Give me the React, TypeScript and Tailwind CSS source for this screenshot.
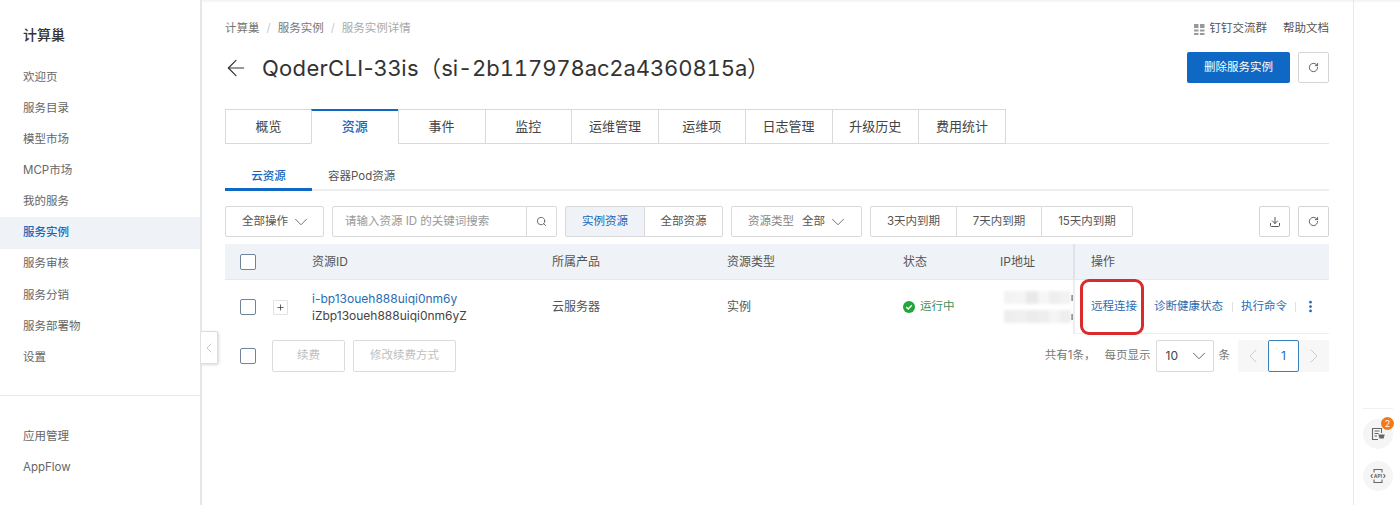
import { ArrowLeft, ChevronDown, ChevronLeft, ChevronRight, Download, EllipsisVertical, Plus, RotateCw, Search } from "lucide-react";
import React from "react";

const font = "font-['Inter','Noto_Sans_CJK_SC',sans-serif]";

const menuTop = ["欢迎页", "服务目录", "模型市场", "MCP市场", "我的服务", "服务实例", "服务审核", "服务分销", "服务部署物", "设置"];
const menuBottom = ["应用管理", "AppFlow"];
const tabs = ["概览", "资源", "事件", "监控", "运维管理", "运维项", "日志管理", "升级历史", "费用统计"];

function Sidebar() {
  return (
    <aside className="relative flex w-[202px] shrink-0 flex-col border-r-2 border-[#e4e6ea] bg-white">
      <h1 className="pl-[23px] pt-[26px] text-[14px] leading-[18px] font-medium text-[#333]">计算巢</h1>
      <nav className="mt-[18px] flex flex-col">
        {menuTop.map((item) => (
          <div
            key={item}
            className={`flex h-[31.1px] items-center pl-[23px] text-[11.5px] ${
              item === "服务实例" ? "bg-[#eff3f8] font-medium text-[#1a66b8]" : "text-[#666]"
            }`}
          >
            {item}
          </div>
        ))}
      </nav>
      <div className="mt-[22px] border-t border-[#e8e8e8] pt-[25px]">
        {menuBottom.map((item) => (
          <div key={item} className="flex h-[31px] items-center pl-[23px] text-[11.5px] text-[#666]">
            {item}
          </div>
        ))}
      </div>
      <div className="absolute left-[201px] top-[331px] z-10 flex h-[33px] w-[17px] items-center justify-center rounded-r-[2px] border border-l-0 border-[#ddd] bg-white shadow-[1px_1px_3px_rgba(0,0,0,0.15)]">
        <ChevronLeft size={20} strokeWidth={1} className="text-[#aaa]" />
      </div>
    </aside>
  );
}

function Header() {
  return (
    <>
      <div className="flex h-[18px] items-center justify-between text-[11.5px]">
        <div className="flex items-center text-[#777]">
          <span>计算巢</span>
          <span className="mx-[7px] text-[#ccc]">/</span>
          <span>服务实例</span>
          <span className="mx-[7px] text-[#ccc]">/</span>
          <span className="text-[#aaa]">服务实例详情</span>
        </div>
        <div className="flex items-center text-[#555]">
          <svg width="11" height="11" viewBox="0 0 11 11" className="mr-[5px] text-[#999]" fill="currentColor">
            <rect x="0" y="0" width="4.5" height="4" />
            <rect x="6" y="0" width="4.5" height="4" />
            <rect x="0" y="5.5" width="4.5" height="2" />
            <rect x="6" y="5.5" width="4.5" height="2" />
            <rect x="0" y="9" width="4.5" height="2" />
            <rect x="6" y="9" width="4.5" height="2" />
          </svg>
          <span>钉钉交流群</span>
          <span className="ml-[16px]">帮助文档</span>
        </div>
      </div>
      <div className="mt-[14px] flex h-[31px] items-center justify-between">
        <div className="flex items-center">
          <ArrowLeft size={26} strokeWidth={1.1} className="-ml-[2px] text-[#333]" />
          <span className="ml-[13px] text-[22px] leading-[30px] font-normal tracking-[0.3px] text-[#333]">
            QoderCLI-33is（<span className="tracking-[-0.1px] tabular-nums">si-2b117978ac2a4360815a</span>）
          </span>
        </div>
        <div className="flex items-center gap-[8px]">
          <button className="h-[31px] w-[103px] rounded-[2px] bg-[#0f68c4] text-[11.5px] text-white">删除服务实例</button>
          <IconButton>
            <RotateCw size={11} className="text-[#555]" />
          </IconButton>
        </div>
      </div>
    </>
  );
}

function IconButton({ children }: { children: React.ReactNode }) {
  return (
    <button className="flex h-[31px] w-[31px] items-center justify-center rounded-[2px] border border-[#d5d5d5] bg-white">
      {children}
    </button>
  );
}

function Tabs() {
  return (
    <div className="mt-[26px] flex h-[35px] border-b border-[#e4e4e4]">
      {tabs.map((tab) => (
        <div
          key={tab}
          className={`-ml-px flex h-[35px] w-[87.75px] items-center justify-center border border-[#d9d9d9] text-[13px] first:ml-0 first:w-[87px] ${
            tab === "资源"
              ? "border-t-[2px] border-t-[#0f68c4] border-b-white font-medium text-[#1a66b8]"
              : "bg-white text-[#444]"
          }`}
        >
          {tab}
        </div>
      ))}
    </div>
  );
}

function SubTabs() {
  return (
    <div className="mt-[16px] flex h-[31px] border-b-2 border-[#eceef0] text-[11.5px]">
      <div className="-mb-[2px] flex h-[31px] w-[87px] items-center justify-center border-b-[3px] border-[#0f68c4] pt-[5px] font-medium text-[#1a66b8]">云资源</div>
      <div className="flex items-center pl-[16px] pt-[4px] text-[#555]">容器Pod资源</div>
    </div>
  );
}

function Toolbar() {
  const box = "flex h-[31px] items-center border border-[#d9d9d9] text-[11.5px]";
  return (
    <div className="mt-[15px] flex h-[31px] items-center">
      <div className={`${box} w-[99px] justify-between rounded-[2px] bg-white pl-[16px] pr-[11px] text-[#555]`}>
        全部操作
        <ChevronDown size={22} strokeWidth={1} className="text-[#666]" />
      </div>
      <div className={`${box} ml-[8px] w-[225px] rounded-[2px] bg-white`}>
        <span className="flex-1 pl-[12px] text-[#999]">请输入资源 ID 的关键词搜索</span>
        <div className="flex h-full w-[30px] items-center justify-center border-l border-[#d9d9d9]">
          <Search size={11} className="text-[#666]" />
        </div>
      </div>
      <div className="ml-[8px] flex">
        <div className={`${box} w-[80px] justify-center rounded-l-[2px] bg-[#eff3f8] text-[#1a66b8]`}>实例资源</div>
        <div className={`${box} -ml-px w-[79px] justify-center rounded-r-[2px] bg-white text-[#555]`}>全部资源</div>
      </div>
      <div className={`${box} ml-[8px] w-[131px] rounded-[2px] bg-white pl-[16px] pr-[12px] text-[#555]`}>
        <span className="text-[#888]">资源类型</span>
        <span className="ml-[8px]">全部</span>
        <ChevronDown size={22} strokeWidth={1} className="ml-auto text-[#666]" />
      </div>
      <div className="ml-[8px] flex">
        <div className={`${box} w-[87px] justify-center rounded-l-[2px] bg-white text-[#555]`}>3天内到期</div>
        <div className={`${box} -ml-px w-[86px] justify-center bg-white text-[#555]`}>7天内到期</div>
        <div className={`${box} -ml-px w-[92px] justify-center rounded-r-[2px] bg-white text-[#555]`}>15天内到期</div>
      </div>
      <div className="ml-auto flex gap-[8px]">
        <IconButton>
          <Download size={12} className="text-[#555]" />
        </IconButton>
        <IconButton>
          <RotateCw size={11} className="text-[#555]" />
        </IconButton>
      </div>
    </div>
  );
}

function Checkbox() {
  return <div className="h-[16px] w-[16px] rounded-[2px] border border-[#6f8399] bg-white" />;
}

// masked IP addresses, drawn as a soft mosaic
const blurRows = [
  ["bg-[#f3f3f3]", "bg-[#f5f5f5]", "bg-[#e9e9e9]", "bg-[#f6f6f6]", "bg-[#eeeeee]", "bg-[#f2f2f2]"],
  ["bg-[#eeeeee]", "bg-[#f0f0f0]", "bg-[#ececec]", "bg-[#eeeeee]", "bg-[#f4f4f4]", "bg-[#eeeeee]"],
];

function Table() {
  return (
    <div className="mt-[7px] text-[12px] text-[#555]">
      <div className="grid h-[36px] grid-cols-[87px_240px_175px_176px_97px_73px_1fr] items-center border-b border-[#e4e7ec] bg-[#eff3f8]">
        <div className="pl-[15px]">
          <Checkbox />
        </div>
        <div>资源ID</div>
        <div>所属产品</div>
        <div>资源类型</div>
        <div>状态</div>
        <div>IP地址</div>
        <div className="flex h-full items-center border-l-2 border-[#dfe3e9] pl-[16px]">操作</div>
      </div>
      <div className="grid h-[54px] grid-cols-[87px_240px_175px_176px_97px_73px_1fr] items-center">
        <div className="flex items-center pl-[15px]">
          <Checkbox />
          <div className="ml-[17px] flex h-[15px] w-[15px] items-center justify-center rounded-[1px] border border-[#e2e2e2]">
            <Plus size={9} strokeWidth={2} className="text-[#333]" />
          </div>
        </div>
        <div className="leading-[17px]">
          <div className="text-[#2b6cb0]">i-bp13oueh888uiqi0nm6y</div>
          <div className="text-[#444]">iZbp13oueh888uiqi0nm6yZ</div>
        </div>
        <div>云服务器</div>
        <div>实例</div>
        <div className="flex items-center text-[11.5px] text-[#3d8f5f]">
          <svg width="12" height="12" viewBox="0 0 12 12" className="mr-[5px]">
            <circle cx="6" cy="6" r="6" fill="#22a63c" />
            <path d="M3.2 6.1 5.2 8 8.8 4.3" fill="none" stroke="#fff" strokeWidth="1.4" />
          </svg>
          运行中
        </div>
        <div className="flex flex-col gap-[6px] pl-[4px]">
          {blurRows.map((row, i) => (
            <div key={i} className="flex h-[13px] items-center">
              <div className="flex h-full w-[67px] blur-[1.5px]">
                {row.map((c, j) => (
                  <div key={j} className={`h-full flex-1 ${c}`} />
                ))}
              </div>
              <div className="h-[6px] w-[1.5px] bg-[#888]" />
            </div>
          ))}
        </div>
        <div className="relative flex h-full items-center border-b border-l-2 border-[#eceef1] pl-[16px] text-[11.5px] text-[#2b6cb0]">
          <span>远程连接</span>
          <span className="ml-[17px]">诊断健康状态</span>
          <span className="ml-[9px] mr-[8px] h-[10px] w-px bg-[#e2e2e2]" />
          <span>执行命令</span>
          <span className="mx-[8px] h-[10px] w-px bg-[#e2e2e2]" />
          <EllipsisVertical size={15} strokeWidth={2.4} className="-ml-px text-[#1a66b8]" />
          <div className="absolute left-[5px] top-[-1px] h-[56px] w-[64px] rounded-[9px] border-[3px] border-[#d92b2b]" />
        </div>
      </div>
    </div>
  );
}

function Footer() {
  const ghost = "flex h-[32px] items-center justify-center rounded-[2px] border border-[#dcdcdc] text-[11.5px] text-[#c0c0c0]";
  return (
    <div className="mt-[6px] flex h-[32px] items-center text-[11.5px] text-[#777]">
      <div className="pl-[15px]">
        <Checkbox />
      </div>
      <div className={`${ghost} ml-[16px] w-[73px]`}>续费</div>
      <div className={`${ghost} ml-[8px] w-[103px]`}>修改续费方式</div>
      <div className="ml-auto flex items-center">
        <span className="mr-[9px]">共有1条，</span>
        <span>每页显示</span>
        <div className="ml-[5px] flex h-[32px] w-[58px] items-center justify-between rounded-[2px] border border-[#d9d9d9] pl-[9px] pr-[3px] text-[12px] text-[#444]">
          10
          <ChevronDown size={22} strokeWidth={1} className="text-[#555]" />
        </div>
        <span className="ml-[5px]">条</span>
        <div className="ml-[8px] flex h-[32px] items-center rounded-[2px] bg-[#f7f7f7]">
          <div className="flex w-[30px] justify-center">
            <ChevronLeft size={24} strokeWidth={1} className="text-[#ccc]" />
          </div>
          <div className="flex h-[32px] w-[31px] items-center justify-center rounded-[2px] border border-[#3a80b8] bg-white text-[12px] text-[#2b6cb0]">1</div>
          <div className="flex w-[30px] justify-center">
            <ChevronRight size={24} strokeWidth={1} className="text-[#ccc]" />
          </div>
        </div>
      </div>
    </div>
  );
}

function RightRail() {
  return (
    <aside className="flex w-[47px] shrink-0 flex-col items-center border-l border-[#e9e9e9] pl-[2px] pt-[408px]">
      <div className="border-t border-[#f0f0f0] pt-[10px]">
        <div className="relative flex h-[30px] w-[30px] items-center justify-center rounded-full bg-[#f5f5f5]">
          <svg width="14" height="14" viewBox="0 0 14 14" fill="none" stroke="#666" strokeWidth="1.1">
            <path d="M10.5 6V1.5h-9v11H7" />
            <path d="M3.5 4h5M3.5 6.5h4M3.5 9h2.5" />
            <path d="M8 8h5l-.8 3H9z" fill="#666" />
          </svg>
          <div className="absolute -right-[1px] -top-[2px] flex h-[13px] w-[13px] items-center justify-center rounded-full bg-[#f07a1a] text-[9px] text-white">2</div>
        </div>
        <div className="mt-[12px] flex h-[30px] w-[30px] items-center justify-center rounded-full bg-[#f5f5f5]">
          <svg width="16" height="16" viewBox="0 0 16 16" fill="none" stroke="#666" strokeWidth="1.1">
            <path d="M4 4.5V1.5h8v3M4 11.5v3h8v-3" />
            <path d="M2.5 6 1 8l1.5 2M13.5 6 15 8l-1.5 2" />
            <text x="8" y="9.8" fontSize="5" textAnchor="middle" fill="#666" stroke="none" fontWeight="700">API</text>
          </svg>
        </div>
      </div>
    </aside>
  );
}

export default function App() {
  return (
    <div className={`flex h-[505px] w-[1400px] overflow-hidden bg-white ${font} shadow-[inset_0_3px_3px_-2px_rgba(0,0,0,0.08)]`}>
      <Sidebar />
      <main className="min-w-0 flex-1 pl-[23px] pr-[24px] pt-[20px]">
        <Header />
        <Tabs />
        <SubTabs />
        <Toolbar />
        <Table />
        <Footer />
      </main>
      <RightRail />
    </div>
  );
}
